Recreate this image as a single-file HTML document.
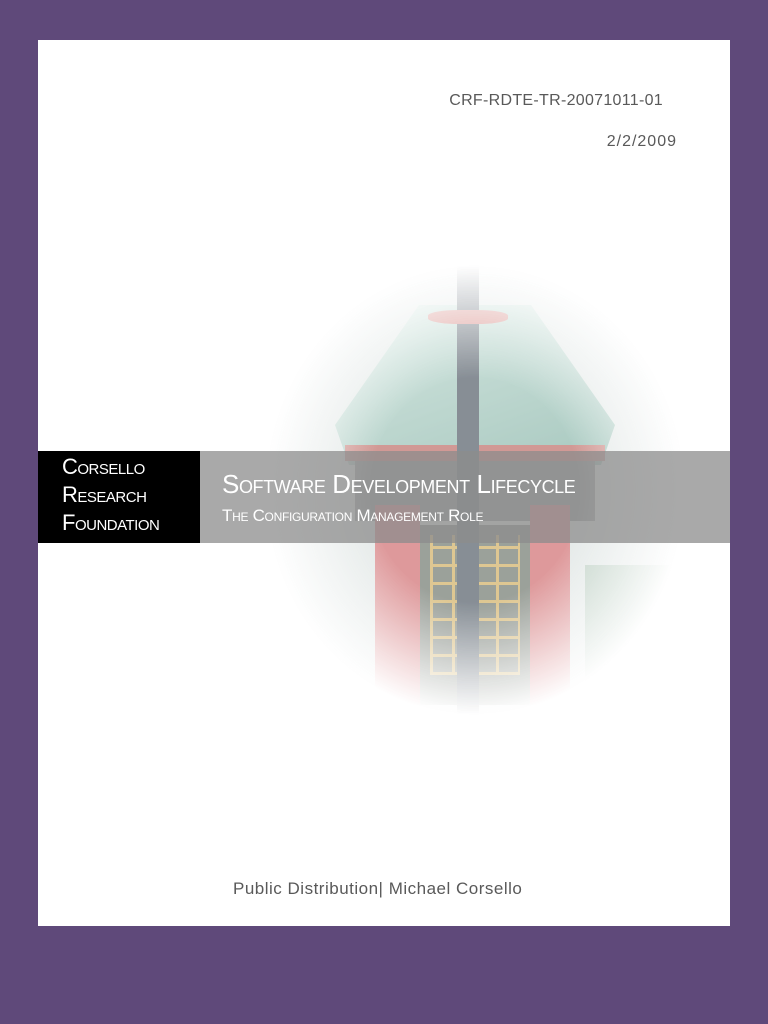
<!DOCTYPE html>
<html><head><meta charset="utf-8"><style>
body{margin:0;width:768px;height:1024px;background:#5f497a;position:relative;overflow:hidden;font-family:"Liberation Sans",sans-serif}
.page{position:absolute;left:38px;top:40px;width:692px;height:886px;background:#fff}
.t{position:absolute;color:#595959;font-size:16px;white-space:nowrap}
.img{position:absolute;left:265px;top:265px;width:420px;height:450px;-webkit-mask-image:radial-gradient(ellipse 50% 50% at 50% 50%,#000 50%,transparent 100%);mask-image:radial-gradient(ellipse 50% 50% at 50% 50%,#000 50%,transparent 100%);opacity:.6}
.img div{position:absolute}
.blk{position:absolute;left:38px;top:451px;width:162px;height:92px;background:#000;color:#fff;font-variant:small-caps;font-size:22px;line-height:28px;padding:2px 0 0 24px;box-sizing:border-box;letter-spacing:-.5px}
.bar{position:absolute;left:200px;top:451px;width:530px;height:92px;background:rgba(140,140,140,.75);color:#fff;font-variant:small-caps;white-space:nowrap}
</style></head><body>
<div class="page"></div>
<div class="img">
 <div style="left:0;top:0;width:420px;height:450px;background:#d4dcda"></div>
 <div style="left:70px;top:40px;width:280px;height:160px;background:linear-gradient(160deg,#bcd9cf,#6fa596);clip-path:polygon(30% 0,70% 0,100% 75%,95% 100%,5% 100%,0 75%)"></div>
 <div style="left:80px;top:180px;width:260px;height:16px;background:#b3564f"></div>
 <div style="left:90px;top:196px;width:240px;height:60px;background:#6a7070"></div>
 <div style="left:110px;top:240px;width:45px;height:200px;background:#c9575a"></div>
 <div style="left:265px;top:240px;width:40px;height:200px;background:#c9575a"></div>
 <div style="left:155px;top:260px;width:110px;height:180px;background:#5a6358"></div>
 <div style="left:165px;top:270px;width:90px;height:140px;background:repeating-linear-gradient(0deg,#c9a24a 0 3px,transparent 3px 18px),repeating-linear-gradient(90deg,#c9a24a 0 3px,transparent 3px 22px)"></div>
 <div style="left:192px;top:0;width:22px;height:450px;background:#384450"></div>
 <div style="left:163px;top:45px;width:80px;height:14px;background:#c8645d;border-radius:40%"></div>
 <div style="left:320px;top:300px;width:100px;height:150px;background:#9fb9a8"></div>
</div>
<div class="t" style="right:105px;top:92px;letter-spacing:.3px">CRF-RDTE-TR-20071011-01</div>
<div class="t" style="right:91px;top:133px;letter-spacing:1px">2/2/2009</div>
<div class="blk">Corsello<br>Research<br>Foundation</div>
<div class="bar">
 <div style="position:absolute;left:22px;top:18px;font-size:26px;letter-spacing:-.4px">Software Development Lifecycle</div>
 <div style="position:absolute;left:22px;top:55px;font-size:17px;letter-spacing:-.3px">The Configuration Management Role</div>
</div>
<div class="t" style="left:233px;top:879px;font-size:17px;letter-spacing:.5px">Public Distribution| Michael Corsello</div>
</body></html>
